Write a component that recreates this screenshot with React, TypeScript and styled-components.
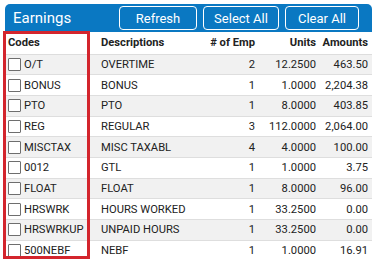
import React from "react";
import styled, { createGlobalStyle } from "styled-components";

const Global = createGlobalStyle`
  html, body { margin: 0; padding: 0; background: #fff; }
  body { font-family: Roboto, "Liberation Sans", Arial, sans-serif; color: #222; }
  *, *::before, *::after { box-sizing: border-box; }
`;

const Panel = styled.div`
  position: relative;
  width: 367px;
  margin: 4px 0 0 5px;
`;

const Header = styled.div`
  display: flex;
  align-items: center;
  height: 28px;
  background: #0a78c2;
  border-radius: 5px 5px 0 0;
  padding: 0 0 0 8px;
`;

const Title = styled.div`
  color: #fff;
  font-size: 15px;
  flex: 0 0 106px;
`;

const Buttons = styled.div`
  display: flex;
  gap: 6px;
`;

const Btn = styled.button<{ $w: number }>`
  width: ${(p) => p.$w}px;
  height: 24px;
  border: 1px solid #fff;
  border-radius: 4px;
  background: transparent;
  color: #fff;
  font-family: Roboto, "Liberation Sans", Arial, sans-serif;
  font-size: 13px;
  padding: 0;
`;

const Table = styled.table`
  width: 367px;
  border-collapse: collapse;
  table-layout: fixed;
  font-size: 11.2px;
`;

const Th = styled.th<{ $w: number; $right?: boolean; $pl?: number; $pr?: number }>`
  width: ${(p) => p.$w}px;
  height: 22px;
  padding: 0 ${(p) => p.$pr ?? 3}px 0 ${(p) => p.$pl ?? 3}px;
  text-align: ${(p) => (p.$right ? "right" : "left")};
  font-weight: 700;
  border-bottom: 1px solid #ddd;
  color: #222;
`;

const Tr = styled.tr<{ $alt: boolean }>`
  background: ${(p) => (p.$alt ? "#f1f1f1" : "#fff")};
  border-bottom: 1px solid #dedede;
`;

const Td = styled.td<{ $right?: boolean; $pl?: number; $pr?: number }>`
  height: 20.7px;
  padding: 0 ${(p) => p.$pr ?? 3}px 0 ${(p) => p.$pl ?? 3}px;
  text-align: ${(p) => (p.$right ? "right" : "left")};
  white-space: nowrap;
  color: #222;
`;

const CodeCell = styled.div`
  display: flex;
  align-items: center;
  gap: 3px;
`;

const Box = styled.span`
  display: inline-block;
  width: 13px;
  height: 13px;
  border: 1px solid #6e6e6e;
  border-radius: 1px;
  background: #fff;
`;

const RedFrame = styled.div`
  position: absolute;
  left: -2px;
  top: 27px;
  width: 87px;
  height: 228px;
  border: 3px solid #d3252d;
  pointer-events: none;
`;

const rows = [
  ["O/T", "OVERTIME", "2", "12.2500", "463.50"],
  ["BONUS", "BONUS", "1", "1.0000", "2,204.38"],
  ["PTO", "PTO", "1", "8.0000", "403.85"],
  ["REG", "REGULAR", "3", "112.0000", "2,064.00"],
  ["MISCTAX", "MISC TAXABL", "4", "4.0000", "100.00"],
  ["0012", "GTL", "1", "1.0000", "3.75"],
  ["FLOAT", "FLOAT", "1", "8.0000", "96.00"],
  ["HRSWRK", "HOURS WORKED", "1", "33.2500", "0.00"],
  ["HRSWRKUP", "UNPAID HOURS", "1", "33.2500", "0.00"],
  ["500NEBF", "NEBF", "1", "1.0000", "16.91"],
];

export default function App() {
  return (
    <>
      <Global />
      <Panel>
        <Header>
          <Title>Earnings</Title>
          <Buttons>
            <Btn $w={78}>Refresh</Btn>
            <Btn $w={76}>Select All</Btn>
            <Btn $w={74}>Clear All</Btn>
          </Buttons>
        </Header>
        <Table>
          <thead>
            <tr>
              <Th $w={91}>Codes</Th>
              <Th $w={104} $pl={5}>Descriptions</Th>
              <Th $w={58} $right>
                # of Emp
              </Th>
              <Th $w={61} $right>
                Units
              </Th>
              <Th $w={53} $right $pr={4}>
                Amounts
              </Th>
            </tr>
          </thead>
          <tbody>
            {rows.map((r, i) => (
              <Tr key={r[0]} $alt={i % 2 === 0}>
                <Td>
                  <CodeCell>
                    <Box />
                    {r[0]}
                  </CodeCell>
                </Td>
                <Td $pl={5}>{r[1]}</Td>
                <Td $right>{r[2]}</Td>
                <Td $right>{r[3]}</Td>
                <Td $right $pr={4}>
                  {r[4]}
                </Td>
              </Tr>
            ))}
          </tbody>
        </Table>
        <RedFrame />
      </Panel>
    </>
  );
}
